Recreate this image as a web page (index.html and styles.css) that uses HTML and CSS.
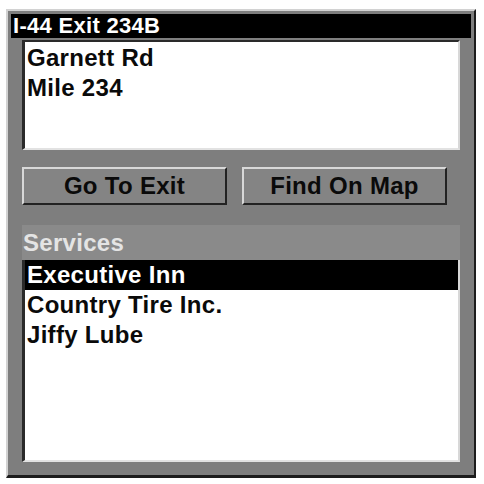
FILE: index.html
```html
<!DOCTYPE html>
<html lang="en">
<head>
  <meta charset="UTF-8">
  <meta name="viewport" content="width=device-width, initial-scale=1.0">
  <title>Exit Info</title>
  <link rel="stylesheet" href="styles.css">
</head>
<body>
  <div class="frame">
    <div class="title-bar">I-44 Exit 234B</div>

    <div class="content">
      <div class="info-box">
        <div class="line">Garnett Rd</div>
        <div class="line">Mile 234</div>
      </div>

      <div class="button-row">
        <button class="btn">Go To Exit</button>
        <button class="btn">Find On Map</button>
      </div>

      <div class="section-header">Services</div>

      <ul class="service-list">
        <li class="selected">Executive Inn</li>
        <li>Country Tire Inc.</li>
        <li>Jiffy Lube</li>
      </ul>
    </div>
  </div>
</body>
</html>
```

FILE: styles.css
```css
body {
  margin: 0;
  background: #fff;
  font-family: "Liberation Sans", Arial, sans-serif;
  font-weight: bold;
}

.frame {
  box-sizing: border-box;
  width: 470px;
  height: 469px;
  margin: 9px 0 0 6px;
  padding: 3px;
  background: #7e7e7e;
  border-top: 2px solid #d2d2d2;
  border-left: 2px solid #d2d2d2;
  border-right: 2px solid #1c1c1c;
  border-bottom: 3px solid #1c1c1c;
  display: flex;
  flex-direction: column;
}

.title-bar {
  height: 24px;
  line-height: 24px;
  background: #000;
  color: #fff;
  font-size: 22px;
  letter-spacing: 0.3px;
  padding-left: 2px;
}

.content {
  padding: 0 11px;
  display: flex;
  flex-direction: column;
}

.info-box {
  box-sizing: border-box;
  height: 110px;
  margin-top: 2px;
  padding: 1px 0 0 2px;
  background: #fff;
  border-top: 2px solid #2a2a2a;
  border-left: 3px solid #2a2a2a;
  border-right: 2px solid #d8d8d8;
  border-bottom: 2px solid #e2e2e2;
}

.line {
  font-size: 24px;
  line-height: 30px;
  letter-spacing: 0.3px;
  color: #0a0a0a;
}

.button-row {
  display: flex;
  gap: 15px;
  margin-top: 17px;
}

.btn {
  box-sizing: border-box;
  width: 205px;
  height: 38px;
  padding: 0;
  background: #848484;
  color: #0a0a0a;
  font-family: inherit;
  font-weight: bold;
  font-size: 24px;
  letter-spacing: 0.3px;
  border-top: 2px solid #d8d8d8;
  border-left: 2px solid #d8d8d8;
  border-right: 2px solid #222;
  border-bottom: 2px solid #222;
}

.section-header {
  height: 35px;
  line-height: 35px;
  margin-top: 20px;
  background: #8a8a8a;
  color: #e4e4e4;
  font-size: 24px;
  letter-spacing: 0.3px;
  padding-left: 1px;
}

.service-list {
  box-sizing: border-box;
  list-style: none;
  margin: 0;
  padding: 0;
  height: 202px;
  background: #fff;
  border-left: 3px solid #2a2a2a;
  border-right: 2px solid #d8d8d8;
  border-bottom: 2px solid #e2e2e2;
}

.service-list li {
  height: 30px;
  line-height: 30px;
  padding-left: 2px;
  font-size: 24px;
  letter-spacing: 0.3px;
  color: #0a0a0a;
}

.service-list li.selected {
  background: #000;
  color: #fff;
}
```
